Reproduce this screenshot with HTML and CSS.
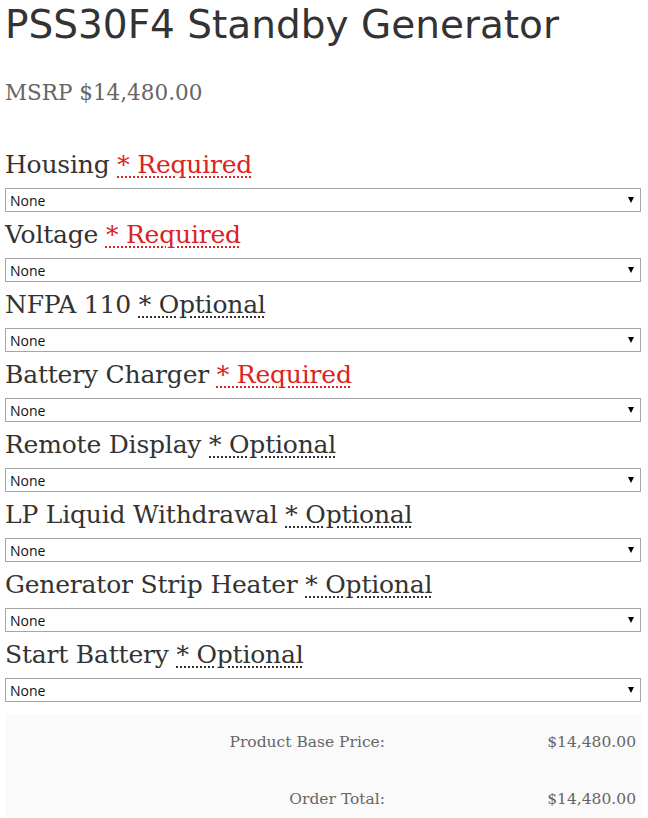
FILE: index.html
```html
<!DOCTYPE html>
<html>
<head>
<meta charset="utf-8">
<link rel="stylesheet" href="styles.css">
</head>
<body>
<div class="page">
  <h1 class="title">PSS30F4 Standby Generator</h1>
  <p class="msrp">MSRP $14,480.00</p>
  <form class="options">
    <div class="field">
      <label class="label">Housing <abbr class="req">* Required</abbr></label>
      <div class="sel"><select><option>None</option></select></div>
    </div>
    <div class="field">
      <label class="label">Voltage <abbr class="req">* Required</abbr></label>
      <div class="sel"><select><option>None</option></select></div>
    </div>
    <div class="field">
      <label class="label">NFPA 110 <abbr class="opt">* Optional</abbr></label>
      <div class="sel"><select><option>None</option></select></div>
    </div>
    <div class="field">
      <label class="label">Battery Charger <abbr class="req">* Required</abbr></label>
      <div class="sel"><select><option>None</option></select></div>
    </div>
    <div class="field">
      <label class="label">Remote Display <abbr class="opt">* Optional</abbr></label>
      <div class="sel"><select><option>None</option></select></div>
    </div>
    <div class="field">
      <label class="label">LP Liquid Withdrawal <abbr class="opt">* Optional</abbr></label>
      <div class="sel"><select><option>None</option></select></div>
    </div>
    <div class="field">
      <label class="label">Generator Strip Heater <abbr class="opt">* Optional</abbr></label>
      <div class="sel"><select><option>None</option></select></div>
    </div>
    <div class="field">
      <label class="label">Start Battery <abbr class="opt">* Optional</abbr></label>
      <div class="sel"><select><option>None</option></select></div>
    </div>
  </form>
  <div class="totals">
    <div class="row"><span class="k">Product Base Price:</span><span class="v">$14,480.00</span></div>
    <div class="row"><span class="k">Order Total:</span><span class="v">$14,480.00</span></div>
  </div>
</div>
</body>
</html>
```
FILE: styles.css
```css
html, body { margin: 0; padding: 0; background: #fff; }
.page { padding: 0 7px 0 5px; }
.title {
  margin: 0;
  padding-top: 2px;
  font-family: "DejaVu Sans", sans-serif;
  font-weight: normal;
  font-size: 39px;
  line-height: 46px;
  color: #333;
  letter-spacing: 0;
}
.msrp {
  margin: 30px 0 0 0;
  font-family: "DejaVu Serif", serif;
  font-size: 21.5px;
  line-height: 30px;
  color: #666;
}
.options { margin-top: 34px; }
.field { display: flex; flex-direction: column; }
.label {
  font-family: "DejaVu Serif", serif;
  font-size: 25px;
  line-height: 46px;
  color: #333;
  height: 46px;
  letter-spacing: -0.2px;
}
abbr { text-decoration: underline dotted; text-underline-offset: 3px; text-decoration-thickness: 2px; }
.req { color: #dd2222; }
.opt { color: #333; }
.sel { position: relative; height: 24px; }
.sel select {
  appearance: none;
  -webkit-appearance: none;
  width: 100%;
  height: 24px;
  margin: 0;
  border: 1px solid #a6a6a6;
  border-radius: 0;
  background: #fff;
  font-family: "Open Sans", sans-serif;
  font-size: 14px;
  color: #111;
  padding: 0 0 0 4px;
}
.sel::after {
  content: "";
  position: absolute;
  right: 7px;
  top: 9px;
  border-left: 3.5px solid transparent;
  border-right: 3.5px solid transparent;
  border-top: 6px solid #000;
  pointer-events: none;
}
.totals {
  margin-top: 12px;
  background: #fafafa;
  padding: 0;
}
.row {
  display: grid;
  grid-template-columns: 380px 1fr;
  height: 57px;
  align-items: center;
  font-family: "DejaVu Serif", serif;
  font-size: 15.5px;
  color: #666;
  padding-bottom: 2px;
  box-sizing: border-box;
}
.row .k { text-align: right; }
.row .v { text-align: right; padding-right: 5px; }
```
